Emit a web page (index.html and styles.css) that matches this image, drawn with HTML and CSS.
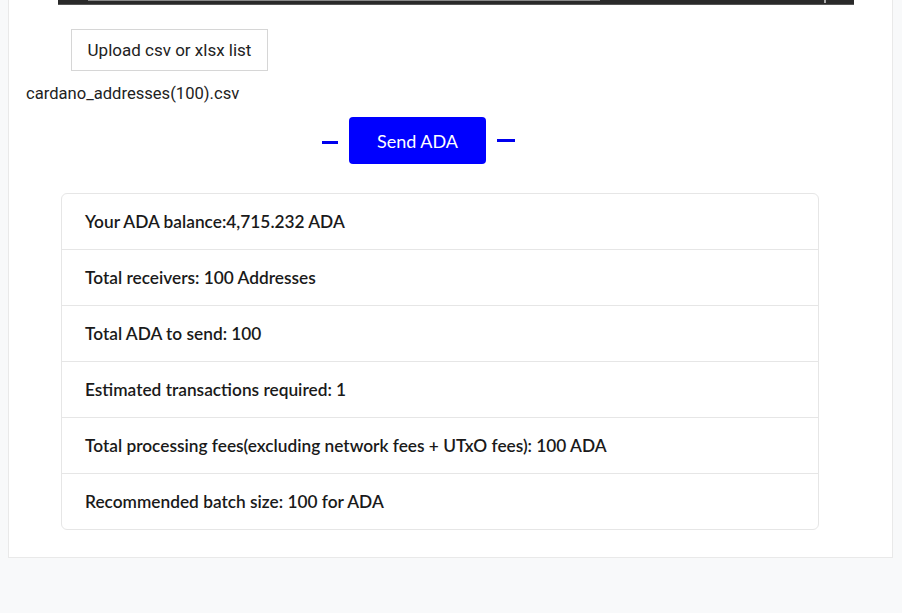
FILE: index.html
```html
<!DOCTYPE html>
<html>
<head>
<meta charset="utf-8">
<link rel="stylesheet" href="styles.css">
</head>
<body>
<div class="page">
  <div class="card">
    <div class="player"><div class="track"></div><div class="knob"></div></div>
    <div class="upload-row"><button class="upload">Upload csv or xlsx list</button></div>
    <div class="filename">cardano_addresses(100).csv</div>
    <div class="send-row">
      <span class="dash"></span>
      <button class="send">Send ADA</button>
      <span class="dash dash-r"></span>
    </div>
    <ul class="stats">
      <li>Your ADA balance:4,715.232 ADA</li>
      <li>Total receivers: 100 Addresses</li>
      <li>Total ADA to send: 100</li>
      <li>Estimated transactions required: 1</li>
      <li>Total processing fees(excluding network fees + UTxO fees): 100 ADA</li>
      <li>Recommended batch size: 100 for ADA</li>
    </ul>
  </div>
</div>
</body>
</html>
```

FILE: styles.css
```css
html, body {
  margin: 0;
  padding: 0;
  background: #f8f9fa;
  height: 100%;
}
.page {
  padding: 0 9px 0 8px;
}
.card {
  background: #fff;
  border: 1px solid #e9e9e9;
  border-top: none;
  padding-bottom: 27px;
}
.player {
  position: relative;
  height: 4px;
  margin: 0 38px 0 49px;
  background: #2a2a2a;
  border-bottom: 1px solid #555;
}
.track {
  position: absolute;
  left: 30px;
  top: 0;
  width: 512px;
  height: 1px;
  background: #8a8a8a;
}
.knob {
  position: absolute;
  left: 766px;
  top: 0;
  width: 2px;
  height: 3px;
  background: #aaa;
}
.upload-row {
  padding: 24px 0 0 62px;
}
.upload {
  font-family: "Roboto", "Liberation Sans", sans-serif;
  font-size: 17px;
  color: #222;
  background: #fff;
  border: 1px solid #d6d6d6;
  border-radius: 0;
  height: 42px;
  padding: 0 15px 0 15px;
  width: 197px;
  cursor: pointer;
}
.filename {
  font-family: "Roboto", "Liberation Sans", sans-serif;
  font-size: 16.6px;
  color: #222;
  padding: 13px 0 0 17px;
  line-height: 20px;
}
.send-row {
  display: flex;
  align-items: center;
  padding: 13px 0 0 313px;
}
.dash {
  display: block;
  width: 16px;
  height: 3px;
  background: #0000ee;
  margin-top: 4px;
}
.dash-r {
  width: 18px;
  margin-top: 0;
}
.send {
  font-family: "Lato", "Noto Sans", sans-serif;
  font-size: 18px;
  color: #fff;
  background: #0000ff;
  border: none;
  border-radius: 4px;
  width: 137px;
  height: 47px;
  margin: 0 11px;
  cursor: pointer;
}
.stats {
  list-style: none;
  margin: 29px 73px 0 52px;
  padding: 0;
  border: 1px solid #e6e6e6;
  border-radius: 6px;
}
.stats li {
  font-family: "Lato", "Noto Sans", sans-serif;
  font-weight: 600;
  font-size: 17.3px;
  color: #1a1a1a;
  height: 55px;
  line-height: 55px;
  padding-left: 23px;
  border-top: 1px solid #e6e6e6;
}
.stats li:first-child {
  border-top: none;
}
```
